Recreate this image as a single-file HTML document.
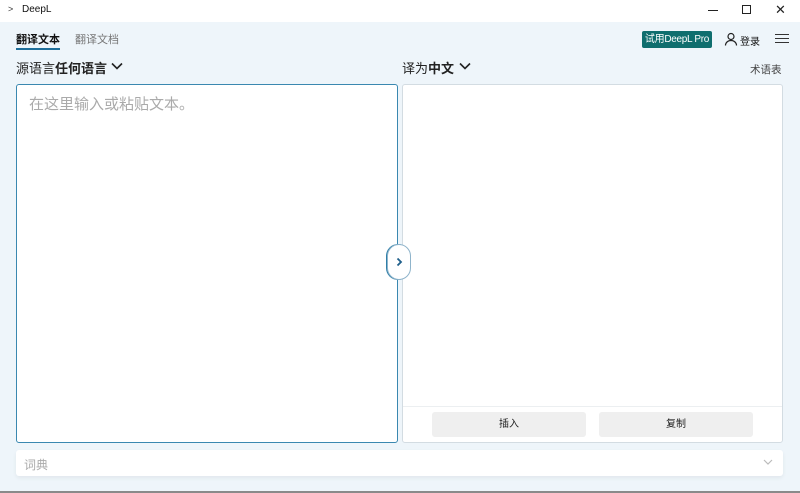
<!DOCTYPE html>
<html><head><meta charset="utf-8"><style>
*{margin:0;padding:0;box-sizing:border-box}
body{width:800px;height:493px;background:#eef5fa;font-family:"Liberation Sans","Noto Sans CJK SC",sans-serif;position:relative;overflow:hidden;color:#222}
.a{position:absolute;white-space:nowrap}
</style></head><body>
<div class="a" style="left:0;top:0;width:800px;height:22px;background:#fff"></div>
<div class="a" style="left:8px;top:4px;font-size:9px;color:#333">&gt;</div>
<div class="a" style="left:22px;top:4px;font-size:10px;color:#111">DeepL</div>
<div class="a" style="left:708px;top:10px;width:10px;height:1px;background:#222"></div>
<div class="a" style="left:742px;top:5px;width:9px;height:9px;border:1px solid #222"></div>
<div class="a" style="left:775px;top:2px;font-size:13px;color:#222">✕</div>

<div class="a" style="left:16px;top:31px;font-size:11px;font-weight:bold;color:#111">翻译文本</div>
<div class="a" style="left:16px;top:48px;width:44px;height:2px;background:#1f6f9a"></div>
<div class="a" style="left:75px;top:31px;font-size:11px;color:#777">翻译文档</div>

<div class="a" style="left:642px;top:31px;width:70px;height:17px;background:#0f6e6e;border-radius:2px;color:#fff;font-size:10px;letter-spacing:-0.3px;line-height:17px;text-align:center">试用DeepL Pro</div>
<svg class="a" style="left:724px;top:32px" width="14" height="14" viewBox="0 0 14 14"><circle cx="7" cy="4.5" r="3" fill="none" stroke="#222" stroke-width="1.2"/><path d="M1.5 13.5c0-3 2.5-5 5.5-5s5.5 2 5.5 5" fill="none" stroke="#222" stroke-width="1.2"/></svg>
<div class="a" style="left:740px;top:33px;font-size:10px;color:#111">登录</div>
<div class="a" style="left:775px;top:34px;width:14px;height:1.3px;background:#333;box-shadow:0 4px 0 #333,0 8px 0 #333"></div>

<div class="a" style="left:16px;top:58px;font-size:13px;color:#222">源语言<span style="font-weight:600">任何语言</span></div>
<svg class="a" style="left:111px;top:62px" width="12" height="8" viewBox="0 0 12 8"><path d="M1 1.5l5 5 5-5" fill="none" stroke="#222" stroke-width="1.6"/></svg>
<div class="a" style="left:402px;top:58px;font-size:13px;color:#222">译为<span style="font-weight:600">中文</span></div>
<svg class="a" style="left:459px;top:62px" width="12" height="8" viewBox="0 0 12 8"><path d="M1 1.5l5 5 5-5" fill="none" stroke="#222" stroke-width="1.6"/></svg>
<div class="a" style="left:750px;top:62px;font-size:10.5px;color:#444">术语表</div>

<div class="a" style="left:16px;top:84px;width:382px;height:359px;background:#fff;border:1px solid #3a88b0;border-radius:3px"></div>
<div class="a" style="left:29px;top:93px;font-size:15px;color:#aaa">在这里输入或粘贴文本。</div>
<div class="a" style="left:402px;top:84px;width:381px;height:359px;background:#fff;border:1px solid #d3dce2;border-radius:3px"></div>
<div class="a" style="left:403px;top:406px;width:379px;height:1px;background:#eceff1"></div>
<div class="a" style="left:432px;top:412px;width:154px;height:25px;background:#efefef;border-radius:3px;font-size:10px;line-height:25px;text-align:center;color:#222">插入</div>
<div class="a" style="left:599px;top:412px;width:154px;height:25px;background:#efefef;border-radius:3px;font-size:10px;line-height:25px;text-align:center;color:#222">复制</div>

<div class="a" style="left:387px;top:244px;width:24px;height:36px;background:#fff;border:1px solid #8fb4cb;border-radius:12px;box-shadow:-1px 0 0 #2f7fa8"></div>
<svg class="a" style="left:396px;top:257px" width="7" height="10" viewBox="0 0 7 10"><path d="M1.5 1.5l3.5 3.5-3.5 3.5" fill="none" stroke="#1f5f8a" stroke-width="1.8"/></svg>

<div class="a" style="left:16px;top:450px;width:767px;height:26px;background:#fff;border-radius:3px;box-shadow:0 2px 4px rgba(0,0,0,0.06)"></div>
<div class="a" style="left:24px;top:456px;font-size:12px;color:#aaa">词典</div>
<svg class="a" style="left:763px;top:459px" width="10" height="7" viewBox="0 0 10 7"><path d="M1 1l4 4 4-4" fill="none" stroke="#bbb" stroke-width="1.2"/></svg>
<div class="a" style="left:0;top:491px;width:800px;height:2px;background:#8a8a8a"></div>
</body></html>
